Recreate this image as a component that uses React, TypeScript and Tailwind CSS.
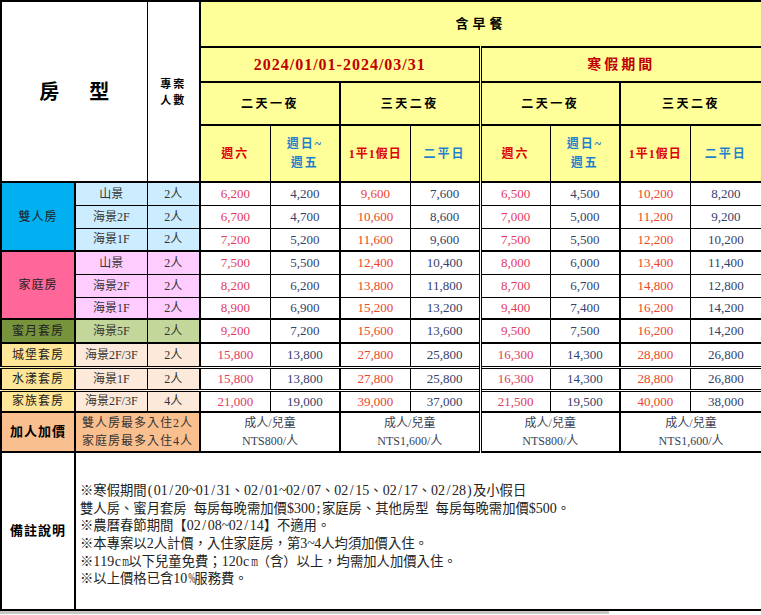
import React from "react";

type Group = {
  name: string;
  bg: string;
  sub: string;
  top: "thick" | "double";
  rows: { view: string; n: string; p: number[] }[];
};

const groups: Group[] = [
  {
    name: "雙人房",
    bg: "bg-[#00b0f0]",
    sub: "bg-[#ccecff]",
    top: "thick",
    rows: [
      { view: "山景", n: "2人", p: [6200, 4200, 9600, 7600, 6500, 4500, 10200, 8200] },
      { view: "海景2F", n: "2人", p: [6700, 4700, 10600, 8600, 7000, 5000, 11200, 9200] },
      { view: "海景1F", n: "2人", p: [7200, 5200, 11600, 9600, 7500, 5500, 12200, 10200] },
    ],
  },
  {
    name: "家庭房",
    bg: "bg-[#ff6699]",
    sub: "bg-[#ffccff]",
    top: "thick",
    rows: [
      { view: "山景", n: "2人", p: [7500, 5500, 12400, 10400, 8000, 6000, 13400, 11400] },
      { view: "海景2F", n: "2人", p: [8200, 6200, 13800, 11800, 8700, 6700, 14800, 12800] },
      { view: "海景1F", n: "2人", p: [8900, 6900, 15200, 13200, 9400, 7400, 16200, 14200] },
    ],
  },
  {
    name: "蜜月套房",
    bg: "bg-[#77933c]",
    sub: "bg-[#c4d79b]",
    top: "thick",
    rows: [{ view: "海景5F", n: "2人", p: [9200, 7200, 15600, 13600, 9500, 7500, 16200, 14200] }],
  },
  {
    name: "城堡套房",
    bg: "bg-[#ffe699]",
    sub: "bg-[#fde9d9]",
    top: "thick",
    rows: [{ view: "海景2F/3F", n: "2人", p: [15800, 13800, 27800, 25800, 16300, 14300, 28800, 26800] }],
  },
  {
    name: "水漾套房",
    bg: "bg-[#ffe699]",
    sub: "bg-[#fde9d9]",
    top: "double",
    rows: [{ view: "海景1F", n: "2人", p: [15800, 13800, 27800, 25800, 16300, 14300, 28800, 26800] }],
  },
  {
    name: "家族套房",
    bg: "bg-[#ffe699]",
    sub: "bg-[#fde9d9]",
    top: "double",
    rows: [{ view: "海景2F/3F", n: "4人", p: [21000, 19000, 39000, 37000, 21500, 19500, 40000, 38000] }],
  },
];

const colLeft = [
  "border-l-2",
  "border-l",
  "border-l-2",
  "border-l",
  "border-l-[3px] [border-left-style:double]",
  "border-l",
  "border-l-2",
  "border-l",
];

const colText = [
  "text-[#e23a5e]",
  "text-[#34426b]",
  "text-[#ec4528]",
  "text-[#34426b]",
  "text-[#e23a5e]",
  "text-[#34426b]",
  "text-[#ec4528]",
  "text-[#34426b]",
];

const rowH = ["h-[23px]", "h-[23px]", "h-[23px]", "h-[23px]", "h-[23px]", "h-[22px]", "h-[24px]", "h-[24px]", "h-[23px]", "h-[22px]"];

const fmt = (v: number) => v.toString().replace(/\B(?=(\d{3})+(?!\d))/g, ",");

const WIDE = "mMW%";

function Mixed({ text }: { text: string }) {
  const chars = Array.from(text);
  return (
    <>
      {chars.map((c, i) => {
        if (c.charCodeAt(0) >= 128) return <React.Fragment key={i}>{c}</React.Fragment>;
        if (WIDE.includes(c))
          return (
            <span key={i} className="inline-block w-[7px] text-center text-[14px] leading-[0]">
              <span className="inline-block w-[7px] scale-x-[0.62] overflow-visible">{c}</span>
            </span>
          );
        return (
          <span key={i} className="inline-block w-[7px] text-center text-[14px] leading-[0]">
            {c === " " ? "\u00a0" : c}
          </span>
        );
      })}
    </>
  );
}

const notes = [
  "※寒假期間(01/20~01/31、02/01~02/07、02/15、02/17、02/28)及小假日",
  "雙人房、蜜月套房 每房每晚需加價$300;家庭房、其他房型 每房每晚需加價$500。",
  "※農曆春節期間【02/08~02/14】不適用。",
  "※本專案以2人計價，入住家庭房，第3~4人均須加價入住。",
  "※119cm以下兒童免費；120cm（含）以上，均需加人加價入住。",
  "※以上價格已含10%服務費。",
];

export default function App() {
  const Y = "bg-[#ffff99]";
  let rowIdx = 0;
  return (
    <div className="w-[761px] bg-white font-['Liberation_Serif','Noto_Sans_CJK_TC',serif] text-[#222]">
      <table className="w-[761px] table-fixed border-collapse border-2 border-black">
        <colgroup>
          <col className="w-[74px]" />
          <col className="w-[72px]" />
          <col className="w-[53px]" />
          <col className="w-[70px]" />
          <col className="w-[70px]" />
          <col className="w-[70px]" />
          <col className="w-[70px]" />
          <col className="w-[70px]" />
          <col className="w-[70px]" />
          <col className="w-[70px]" />
          <col className="w-[72px]" />
        </colgroup>
        <thead>
          <tr className="h-[46px]">
            <th rowSpan={4} colSpan={2} className="border border-black bg-white p-0 align-middle">
              <div className="flex justify-center gap-[30px] text-[20px] font-bold text-black">
                <span>房</span>
                <span>型</span>
              </div>
            </th>
            <th rowSpan={4} className="border border-r-2 border-black bg-white p-0 align-middle text-[11px] font-bold leading-[16px] tracking-[2px] text-black">
              專案
              <br />
              人數
            </th>
            <th colSpan={8} className={`border border-black ${Y} p-0 text-[13px] font-bold tracking-[4px] text-black`}>
              含早餐
            </th>
          </tr>
          <tr className="h-[35px]">
            <th colSpan={4} className={`border border-t-2 border-black ${Y} p-0 text-[16px] font-bold tracking-[1px] text-[#c00000]`}>
              2024/01/01-2024/03/31
            </th>
            <th colSpan={4} className={`border border-t-2 border-l-[3px] [border-left-style:double] border-black ${Y} p-0 text-[14px] font-bold tracking-[3px] text-[#c00000]`}>
              寒假期間
            </th>
          </tr>
          <tr className="h-[43px]">
            {["二天一夜", "三天二夜", "二天一夜", "三天二夜"].map((t, i) => (
              <th
                key={i}
                colSpan={2}
                className={`border border-t-2 border-black ${colLeft[i * 2]} ${Y} p-0 text-[12px] font-bold tracking-[2.5px] text-black`}
              >
                {t}
              </th>
            ))}
          </tr>
          <tr className="h-[57px]">
            {[0, 1].map((g) => (
              <React.Fragment key={g}>
                <th className={`border border-t-2 border-black ${colLeft[g * 4]} ${Y} p-0 text-[12px] font-bold tracking-[2px] text-[#e00000]`}>
                  週六
                </th>
                <th className={`border border-t-2 border-black ${colLeft[g * 4 + 1]} ${Y} p-0 text-[12px] font-bold leading-[19px] tracking-[2px] text-[#1f7fcf]`}>
                  週日~
                  <br />
                  週五
                </th>
                <th className={`border border-t-2 border-black ${colLeft[g * 4 + 2]} ${Y} p-0 text-[12px] font-bold tracking-[1px] text-[#e00000]`}>
                  1平1假日
                </th>
                <th className={`border border-t-2 border-black ${colLeft[g * 4 + 3]} ${Y} p-0 text-[12px] font-bold tracking-[2px] text-[#1f7fcf]`}>
                  二平日
                </th>
              </React.Fragment>
            ))}
          </tr>
        </thead>
        <tbody>
          {groups.map((g) =>
            g.rows.map((r, i) => {
              const top =
                i === 0
                  ? g.top === "double"
                    ? "border-t-[3px] [border-top-style:double]"
                    : "border-t-2"
                  : "border-t";
              const h = rowH[rowIdx++];
              return (
                <tr key={g.name + i} className={h}>
                  {i === 0 && (
                    <td
                      rowSpan={g.rows.length}
                      className={`border border-r-2 border-black ${top} ${g.bg} p-0 text-center align-middle text-[12px] tracking-[1px] text-[#222]`}
                    >
                      {g.name}
                    </td>
                  )}
                  <td className={`border border-black ${top} ${g.sub} p-0 text-center text-[12px] text-[#333]`}>
                    {r.view}
                  </td>
                  <td className={`border border-black ${top} ${g.sub} p-0 text-center text-[12px] text-[#333]`}>
                    {r.n}
                  </td>
                  {r.p.map((v, c) => (
                    <td
                      key={c}
                      className={`border border-black ${top} ${colLeft[c]} bg-white p-0 text-center text-[13px] ${colText[c]}`}
                    >
                      {fmt(v)}
                    </td>
                  ))}
                </tr>
              );
            })
          )}
          <tr className="h-[40px]">
            <td className="border border-t-2 border-r-2 border-black bg-[#fabf8f] p-0 text-center text-[13px] font-bold tracking-[1px] text-black">
              加人加價
            </td>
            <td
              colSpan={2}
              className="border border-t-2 border-black bg-[#fabf8f] p-0 text-center text-[12px] leading-[18px] tracking-[1px] text-[#333]"
            >
              雙人房最多入住2人
              <br />
              家庭房最多入住4人
            </td>
            {["NTS800/人", "NTS1,600/人", "NTS800/人", "NTS1,600/人"].map((t, i) => (
              <td
                key={i}
                colSpan={2}
                className={`border border-t-2 border-black ${colLeft[i * 2]} bg-white p-0 text-center text-[12px] leading-[18px] text-[#3a3f55]`}
              >
                成人/兒童
                <br />
                {t}
              </td>
            ))}
          </tr>
          <tr className="h-[158px]">
            <td className="border border-t-2 border-r-2 border-black bg-white p-0 text-center text-[13px] font-bold tracking-[1px] text-black">
              備註說明
            </td>
            <td
              colSpan={10}
              className="border border-t-2 border-black bg-white pb-0 pt-[8px] pl-[4px] pr-0 text-left align-middle text-[13.33px] leading-[17.6px] text-[#222]"
            >
              {notes.map((n, i) => (
                <div key={i} className="h-[17.6px] whitespace-nowrap">
                  <Mixed text={n} />
                </div>
              ))}
            </td>
          </tr>
        </tbody>
      </table>
      <div className="h-[3px] w-[609px] bg-[#c8c8c8]" />
    </div>
  );
}
